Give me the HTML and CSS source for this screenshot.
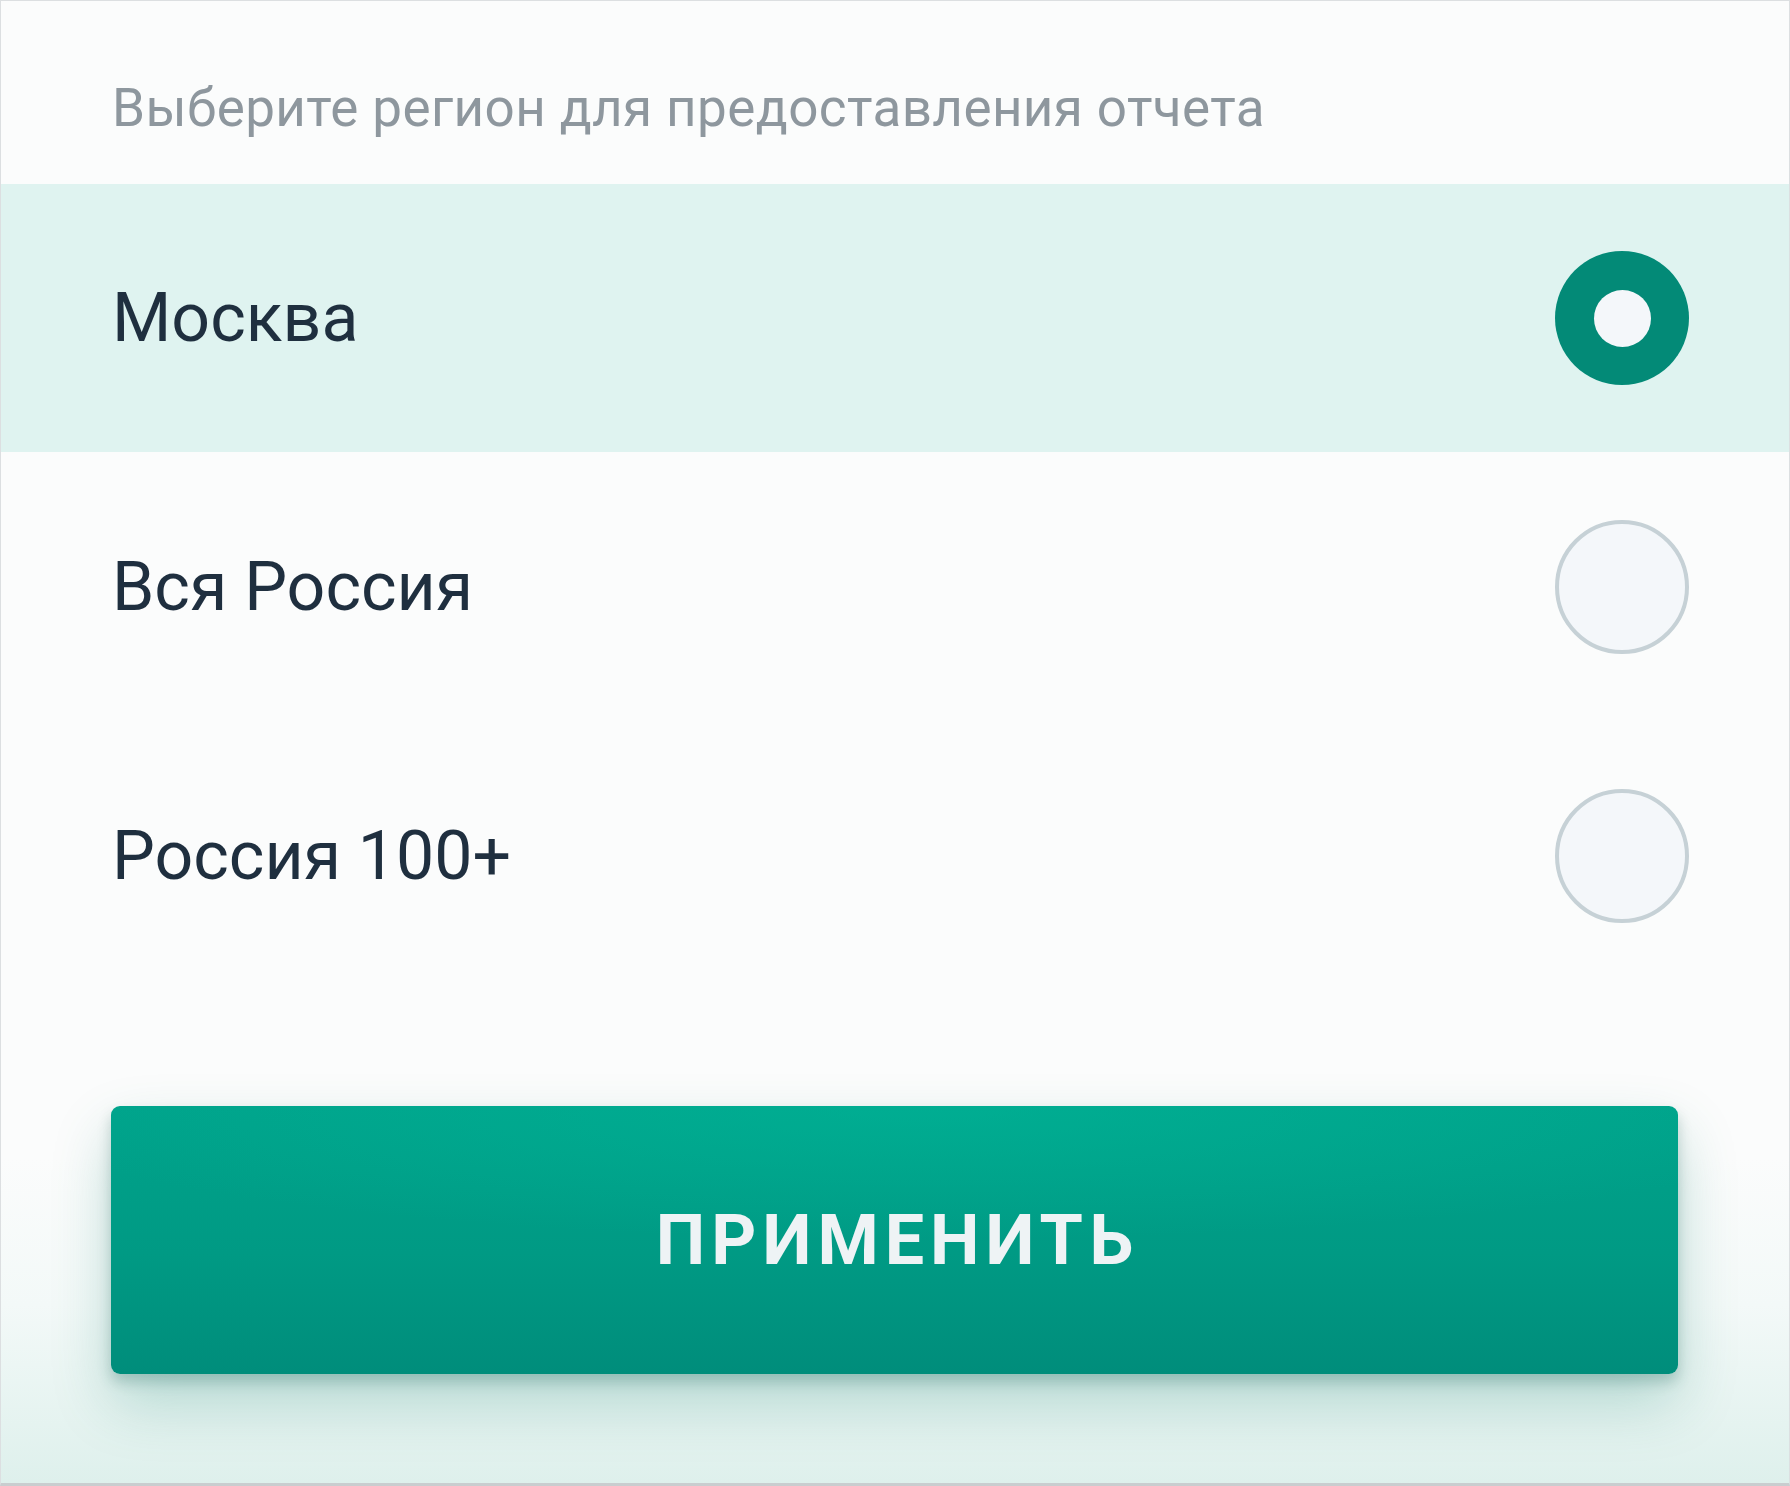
FILE: index.html
```html
<!DOCTYPE html>
<html lang="ru">
<head>
<meta charset="utf-8">
<title>Регион</title>
<link rel="stylesheet" href="styles.css">
</head>
<body>
<div class="screen">
  <div class="header">Выберите регион для предоставления отчета</div>
  <div class="options">
    <div class="option option--selected">
      <span class="option__label">Москва</span>
      <span class="radio radio--on"><span class="radio__dot"></span></span>
    </div>
    <div class="option">
      <span class="option__label">Вся Россия</span>
      <span class="radio"></span>
    </div>
    <div class="option">
      <span class="option__label">Россия 100+</span>
      <span class="radio"></span>
    </div>
  </div>
  <div class="actions">
    <button class="apply">ПРИМЕНИТЬ</button>
  </div>
</div>
</body>
</html>
```
FILE: styles.css
```css
html, body {
  margin: 0;
  padding: 0;
}
body {
  background: #fbfcfc;
  font-family: Roboto, "Noto Sans", "Liberation Sans", sans-serif;
}
.screen {
  box-sizing: border-box;
  width: 1790px;
  height: 1486px;
  border: 1px solid #dcdfe1;
  border-bottom: 3px solid #c9cdcf;
  background: linear-gradient(180deg, #fbfcfc 0%, #fbfcfc 78%, #f3f9f8 88%, #def0ec 100%);
  display: flex;
  flex-direction: column;
  overflow: hidden;
}
.header {
  height: 183px;
  box-sizing: border-box;
  padding: 30px 0 0 111px;
  display: flex;
  align-items: center;
  font-size: 53px;
  color: #8e979e;
  letter-spacing: 0.4px;
}
.options {
  display: flex;
  flex-direction: column;
}
.option {
  height: 268px;
  box-sizing: border-box;
  padding: 0 100px 0 111px;
  display: flex;
  align-items: center;
  justify-content: space-between;
}
.option + .option {
  height: 269px;
}
.option--selected {
  background: #dff3f0;
}
.option__label {
  font-size: 68px;
  color: #1f2f3f;
}
.radio {
  box-sizing: border-box;
  width: 134px;
  height: 134px;
  border-radius: 50%;
  border: 4px solid #c6d1d6;
  background: #f4f7fa;
  display: flex;
  align-items: center;
  justify-content: center;
}
.radio--on {
  border: none;
  background: #038a77;
}
.radio__dot {
  width: 57px;
  height: 57px;
  border-radius: 50%;
  background: #f4f7fa;
}
.actions {
  padding: 116px 111px 0 110px;
}
.apply {
  width: 100%;
  height: 268px;
  border: none;
  border-radius: 9px;
  background:
    radial-gradient(ellipse 60% 50% at 52% 0%, rgba(0, 182, 152, 0.55), rgba(0, 182, 152, 0) 100%),
    linear-gradient(180deg, #00a38b 0%, #009a84 55%, #008d7b 100%);
  box-shadow: 0 28px 60px rgba(0, 120, 100, 0.24), 0 8px 14px rgba(0, 70, 60, 0.22);
  color: #eef3f5;
  font-family: Roboto, "Noto Sans", sans-serif;
  font-weight: 700;
  font-size: 70px;
  letter-spacing: 6px;
  padding: 0 0 0 6px;
}
```
